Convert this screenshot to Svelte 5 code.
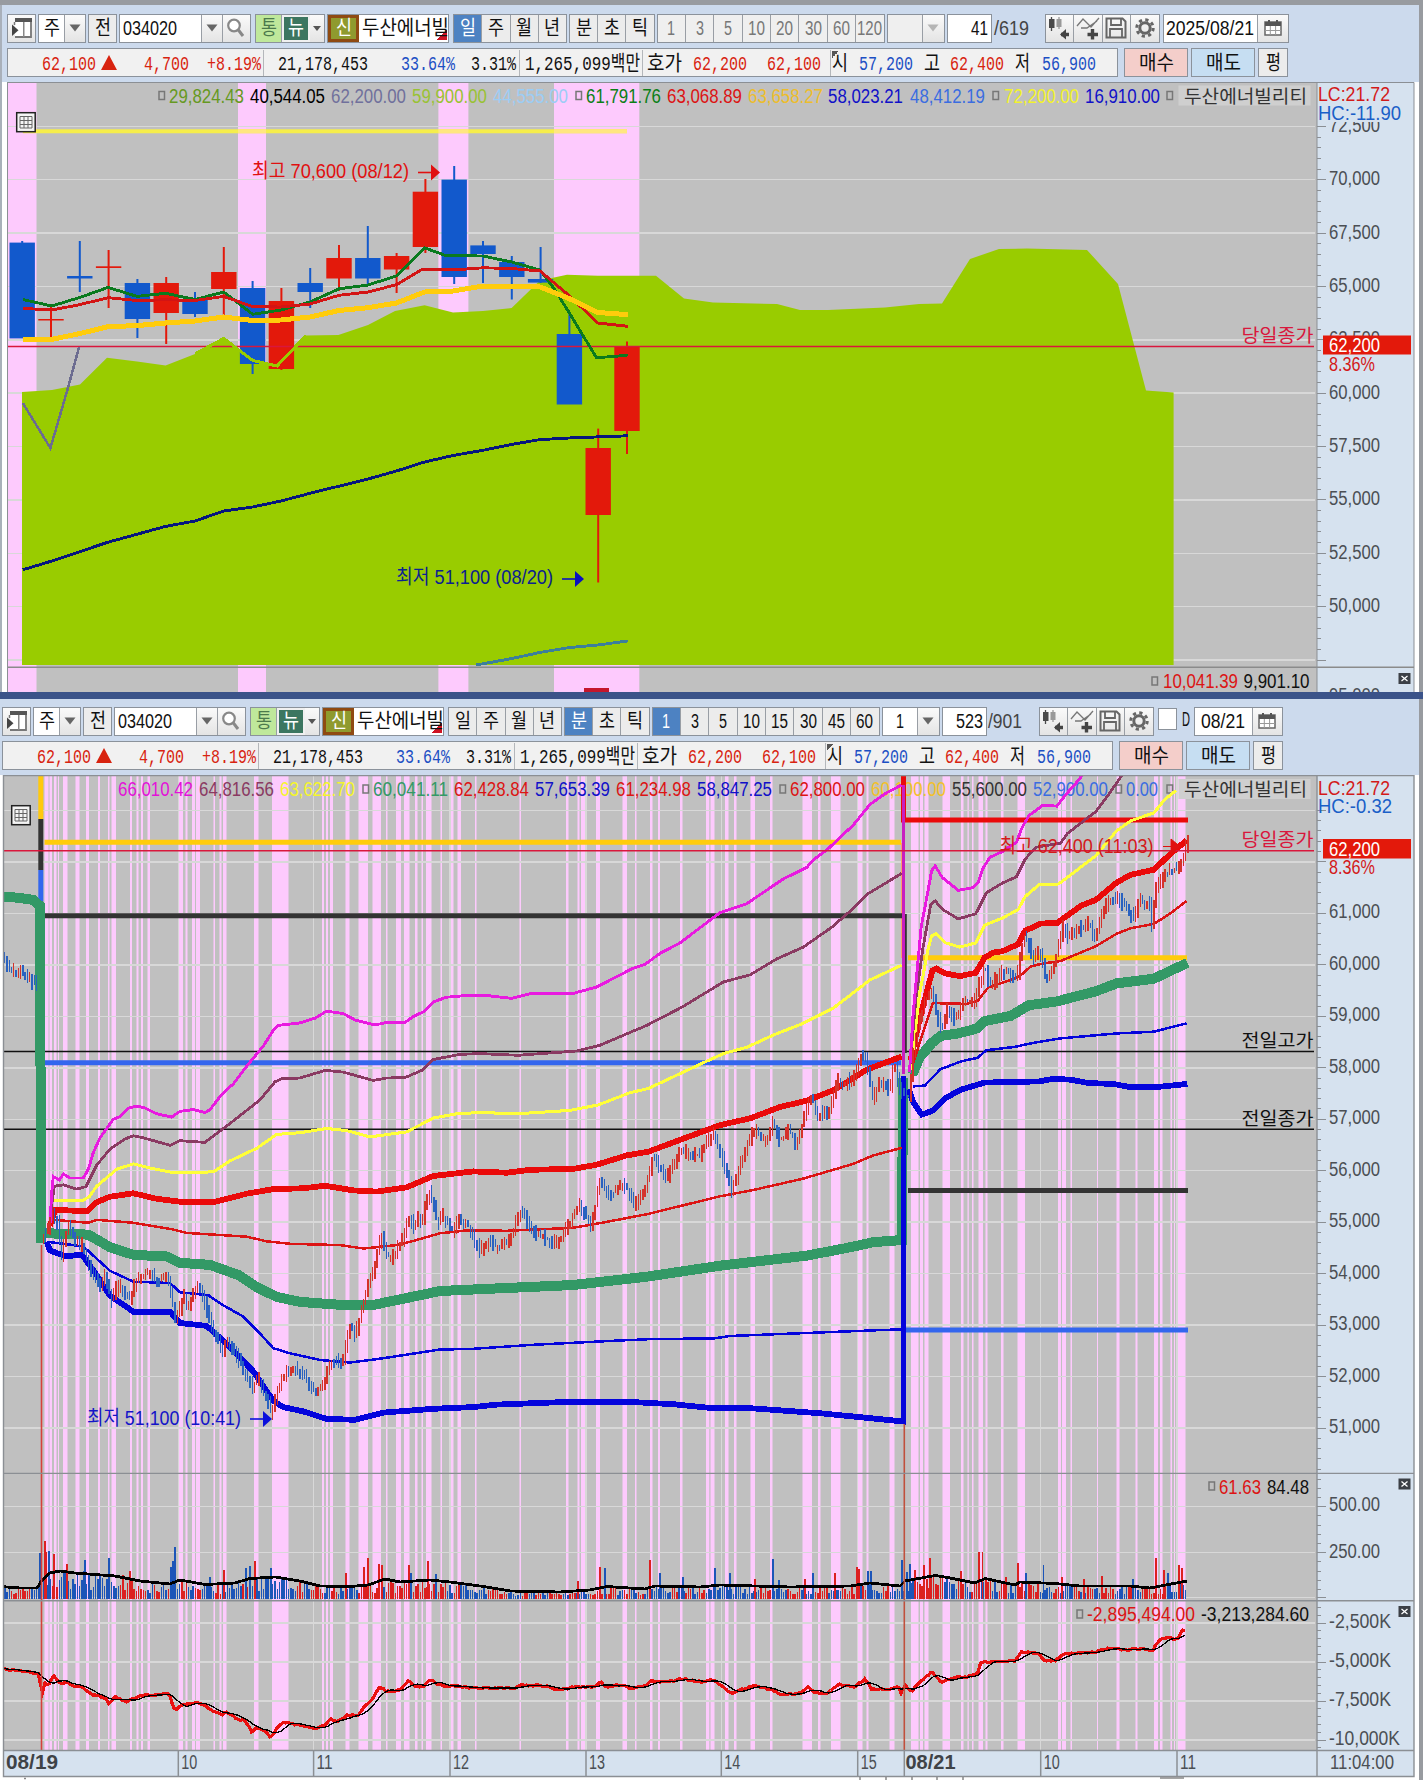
<script>
  const RED = '#e3190b';
  const BLUE = '#1259cc';
  const GREY = '#8b8f94';

  const info = [
    [34, '62,100', 54, '#d8230f'], [5, 'up', 16], [27, '4,700', 45, '#d8230f'], [18, '+8.19%', 54, '#d8230f'],
    [2, '|', 1], [14, '21,178,453', 90, '#111'], [33, '33.64%', 54, '#1c4fc4'], [16, '3.31%', 45, '#111'],
    [3, '|', 1], [5, '1,265,099백만', 115, '#111'], [2, '|', 1], [4, '호가', 35, '#111'],
    [11, '62,200', 54, '#d8230f'], [20, '62,100', 54, '#d8230f'], [9, '|', 1], [1, '시', 16, '#111', true],
    [11, '57,200', 54, '#1c4fc4'], [11, '고', 16, '#111'], [10, '62,400', 54, '#d8230f'],
    [11, '저', 15, '#111'], [12, '56,900', 54, '#1c4fc4']
  ];

  const c = (w, text = '', kind = '', tw = 0) => ({ w, text, kind, tw });
  const head = [
    { gap: 0, cells: [c(29, 'panel', 'icon')] },
    { gap: 2, cells: [c(27, '주', 'field', 16), c(21, 'down', 'icon')] },
    { gap: 2, cells: [c(29, '전', '', 16)] },
    { gap: 2, cells: [c(82, '034020', 'field left', 54), c(21, 'down', 'icon'), c(29, 'search', 'icon')] },
    { gap: 4, cells: [c(28, '통', 'lime', 16), c(26, '뉴', 'teal', 16), c(16, 'small', 'icon')] },
    { gap: 2, cells: [c(28, '신', 'olive', 16), c(94, '두산에너빌', 'field left flag', 87)] }
  ];
  const periods = ['일', '주', '월', '년'];
  const units = ['분', '초', '틱'];
  const textWidth = (t) => (t > '가' ? 16 : [0, 8, 17, 25][t.length]);
  const pick = (list, on, kind = '') => list.map((t) => c(28.5, t, t === on ? 'on' : kind, textWidth(t)));
  const tools = { gap: 0, cells: ['candle', 'line', 'save', 'gear'].map((n) => c(28.75, n, 'icon')) };

  const daily = [
    ...head,
    { gap: 4, cells: pick(periods, '일') },
    { gap: 2, cells: pick(units, '') },
    { gap: 2, cells: pick(['1', '3', '5', '10', '20', '30', '60', '120'], '', 'off') },
    { gap: 2, cells: [c(36, '', 'off'), c(22, 'downoff', 'icon')] },
    { gap: 2, cells: [c(45, '41', 'field right', 17)] }
  ];
  const minute = [
    ...head,
    { gap: 4, cells: pick(periods, '') },
    { gap: 2, cells: pick(units, '분') },
    { gap: 2, cells: pick(['1', '3', '5', '10', '15', '30', '45', '60'], '1') },
    { gap: 2, cells: [c(36, '1', 'field', 8), c(22, 'down', 'icon')] },
    { gap: 2, cells: [c(45, '523', 'field right', 27)] }
  ];
  const total = (cells) => cells.reduce((s, cell) => s + cell.w, 0);

  // daily chart
  const dx = (i) => 22.2 + 28.8 * i;
  const candles = [
    [0, 241, 338, 242.6, 338.4], [1, 306, 342, 319, 320.5], [0, 241, 292, 276, 278.5], [1, 250, 308, 266.3, 268],
    [0, 279, 338, 283, 319], [1, 277, 344, 283, 313], [0, 292, 317, 299.5, 314], [1, 247, 315, 272, 289],
    [0, 281, 374, 288, 364], [1, 288, 370, 301, 369], [0, 268, 308, 283, 292], [1, 245, 291, 258, 278.5],
    [0, 226, 284, 258, 278.5], [1, 253, 293, 256, 269.5], [1, 179, 253, 191.7, 247], [0, 166, 284, 179.6, 277],
    [0, 241, 283, 245.4, 254], [0, 256, 299.5, 262, 277], [0, 247, 283, 279, 282.6], [0, 313, 404, 334, 404.5],
    [1, 428.6, 582.5, 448, 515], [1, 341.5, 454, 347, 431]
  ];
  const cloud = '22,392 52,390 80,384.5 107,357.7 137,361.5 165.6,365.6 195,354 223.7,338.4 252.7,360.5 277,366 306,335.6 338.4,335 368,325 395,311 424.6,305.3 453,312.5 483,311 511.6,308 540,280.5 567,274.7 597.8,275.7 656,275.7 684,298.4 713,302.5 777,304 800,310 828,310 885,307.5 919,304 942,303.5 970,259 999,249 1027,248.5 1087,250 1118,284 1146,390.5 1173.6,392.6';
  const ma5 = '22.8,299.5 51.8,306 80,297.4 108,287.4 137,296.4 165.6,293.3 195,299.5 223.7,292 252.7,314.3 281,310 310,302 339,288.8 368,285 396.4,276 424.6,247.8 446,255.7 483,256 511.6,262 540,270 553.6,288 568.8,312 596.4,357.7 616,356.3 627.7,355';
  const ma10 = '22.8,308.4 51.8,310 80,304.6 108,297.7 137,300.5 165.6,299.8 195,300.5 223.7,296.4 252.7,306.7 281,307 310,304 339,295.3 368,292 396.4,284.7 422,269.5 460,269.5 483,267.8 511.6,268.5 540,271 568.8,295.3 597.8,323 627.7,326.3';
  const ma20 = '22.8,340 51.8,339.4 80,333.5 108,326.7 137,325.6 165.6,323 195,321 223.7,317 252.7,320.5 281,320 310,317 339,310.5 368,307.7 396.4,303 424.6,292 453,291 483,286 531,286 540,287 568.8,298.4 597.8,312.5 627.7,314.6';
  const ma60 = '22.8,569.8 51.8,561 108,542.2 165.6,526.4 195,521 223.7,511 252.7,507 281,501 310,493.3 368,479 396.4,471 424.6,462 453,455.5 483,450.3 511.6,444.4 540,439.6 568.8,438 597.8,436.9 627.7,435.8';
  const ma120 = '476,665 511.6,658.6 540,652.4 568.8,647.6 597.8,645 627.7,641';
  const dailyGrid = [72500, 70000, 67500, 65000, 62500, 60000, 57500, 55000, 52500, 50000, 47500].map((p, i) => [p, 126.3 + i * 53.37]);
  const dailyLegend = [
    [158], [169, '29,824.43', '#669922'], [250, '40,544.05', '#000'], [331, '62,200.00', '#70709c'], [412, '59,900.00', '#99c234'],
    [493, '44,555.00', '#9ccdf5'], [575], [586, '61,791.76', '#0b7f16'], [667, '63,068.89', '#dc1414'], [748, '63,658.27', '#edbd2c'],
    [828, '58,023.21', '#1010c8'], [910, '48,412.19', '#3b6de0'], [992], [1004, '72,200.00', '#f2f22c'], [1085, '16,910.00', '#1010c8'], [1166]
  ];

  // minute chart
  const bands = [
    [44.5, 4], [49.5, 2.5], [54, 2.5], [58, 1], [63, 4.5], [75.5, 4], [86, 3], [98, 2], [108, 1.5], [111.5, 4.5], [130, 2], [136.5, 2],
    [141, 2], [147.5, 2.5], [178.5, 4.5], [185.5, 2], [192, 3], [196, 4], [213.5, 1.5], [219.5, 2], [223, 3.5], [254, 4.5],
    [272, 16.5], [322, 2], [326, 2], [330, 3], [345.5, 4], [358.5, 9.5], [372.5, 8.5], [386, 1.5], [396, 5], [404, 5.5],
    [415, 2.5], [421.5, 1.5], [426, 5.5], [440.5, 1.5], [449.5, 4], [457.5, 3.5], [475, 1.5], [519.5, 1.5], [566, 2.5],
    [577.5, 2], [581, 5.5], [596, 4], [622.5, 4.5], [635, 1.5], [650, 2.5], [658, 2], [680, 2.5], [706, 3.3], [710.5, 4],
    [725, 3.5], [734, 2.5], [750.5, 4.5], [770, 2.5], [802.5, 9.5], [818, 2.5], [831, 9.5], [857.5, 5], [866.5, 2],
    [889.5, 5], [911, 7.5], [920, 3], [924.5, 4], [942.5, 7.5], [961, 2.5], [967.5, 1.3], [972, 1.5], [978.5, 4.5],
    [985.5, 2], [1001, 2.5], [1017.5, 7.5], [1058, 3], [1062, 4], [1070.5, 1.5], [1097, 1], [1116.5, 3], [1135.5, 2],
    [1154, 4], [1160, 2.5], [1170.5, 1.5], [1174, 1], [1177, 8.5]
  ];
  const magenta = [
    '50,1224 51.7,1192.5 53.3,1176.5 59.3,1180 63.3,1174 70,1178 83.3,1178 88.3,1169.3 93.3,1152.5 100,1137.8 113.3,1119.3 120,1116.7 128.3,1108.3 136.7,1106.2 145,1107.9 156.7,1113.8 171.7,1117.1 180,1111.3 193.3,1109.6 205,1112.5 210,1109.6 221.7,1094.4 233.3,1083.9 246.7,1066.2 263.3,1046 273.3,1030.4 278.3,1025.4 300,1022.9 315,1018.2 326.7,1011.1 343.3,1013.6 355,1019.9 375,1025 386.7,1022.4 405,1022.4 413.3,1016.5 425,1011 433.3,1001.8 446.7,997.2 466.7,995.5 490,995.9 511.7,998.4 530,993.8 573.3,993.4 596.7,987 633.3,968.1 645,964.4 660,953.4 680,942.9 720,912.6 746.7,903.7 783.3,878.9 806.7,867.5 813.3,860 828.3,848.6 853.3,825 870,804.4 886.7,792.6 901.7,785',
    '909.5,1072.5 913,1015.7 921.1,927.3 927.1,895.7 931.7,870.5 935.2,865.9 942.3,877.6 958.2,890.3 972.3,887.8 977.9,883.1 982.9,868.4 989.9,857.4 1002.3,851.6 1016.4,842.3 1021.7,828.4 1028.7,815.8 1042.8,805.3 1056.9,806.1 1065.7,794.7 1078.8,780 1083,774'
  ];
  const plum = [
    '50,1217.7 54.3,1186.2 63.3,1184.9 76.7,1189.1 86,1186.6 96.7,1165.1 110,1149.1 125,1139 133.3,1135.7 143.3,1137.8 170,1145.3 180,1140.7 205,1142.4 220,1131 233.3,1120.9 260,1099.9 275,1081.8 281.7,1078.8 300,1078 325,1070.4 343.3,1072.1 373.3,1080.5 386.7,1078 405,1077.6 421.7,1070.4 433.3,1059.5 460,1054.4 480,1053.6 518.3,1055.3 576.7,1051 600,1045.2 646.7,1025.4 681.7,1007.3 723.3,982 750,974.9 776.7,958.9 803.3,947.1 831.7,927.3 853.3,908.4 866.7,894.5 901.7,873.4',
    '909.5,1070.4 915.9,998.9 922.9,948.4 930.7,905 935.2,900.8 942.3,909.2 958.2,918.9 975.8,913.8 986.4,892.8 1002.3,883.1 1016.4,876.8 1025.2,859.1 1035.8,847.3 1060.5,843.1 1067.5,833.5 1095.7,811.6 1106.3,797.7 1118.7,780 1123,774'
  ];
  const yellow = [
    '53.3,1200 81.7,1200.9 89.3,1196.7 96.7,1186.2 116.7,1169.3 133.3,1163.9 150,1168 173.3,1172.7 213.3,1171.9 230,1160.9 256.7,1148.3 276.7,1134.4 300,1132.7 326.7,1128.5 346.7,1130.6 370,1136.9 406.7,1131.9 433.3,1118 456.7,1113.8 480,1112.5 516.7,1113.8 570,1110.4 598.3,1104.9 630,1092.7 648.3,1088.5 706.7,1061.2 723.3,1053.6 746.7,1047.3 773.3,1035.1 803.3,1023.3 833.3,1008.1 870,979.9 901.7,965.2',
    '910.6,1070.4 919.4,994.7 928.2,948.4 931.7,935.7 936.3,933.6 945.8,942.9 959.9,947.1 975.8,942.9 984.6,925.2 1002.3,918.1 1018.1,909.6 1025.2,896.6 1039.3,884.4 1058.7,884 1095.7,855.8 1116.9,830.5 1131,820.8 1153.9,812.8 1164.5,799.8 1176.1,790.5'
  ];
  const upper = [
    '50,1226 55,1209.7 86.7,1211.4 96.7,1202.2 110,1196.7 133.3,1193.3 156.7,1198.8 180,1201.7 213.3,1202.2 246.7,1193.7 273.3,1189.1 303.3,1188.3 325,1185.7 353.3,1190.4 376.7,1191.6 406.7,1187.4 433.3,1176 473.3,1171.4 506.7,1172.7 530,1169.8 573.3,1168.9 596.7,1164.7 626.7,1155.4 648.3,1151.7 680,1139.9 720,1125.1 750,1118.4 780,1107 806.7,1100.7 833.3,1090.2 846.7,1082.2 866.7,1069.6 901.7,1056.5',
    '910.6,1060 919.4,1019.9 928.2,986.2 932.4,970.7 936.3,968.6 945.8,973.6 959.9,976.1 975.8,972.8 984.6,957.6 993.4,952.6 1002.3,951.3 1018.1,944.2 1025.2,930.7 1041,923.5 1056.9,923.1 1081.6,905.4 1095.7,900 1116.9,882.3 1131,874.7 1153.9,869.7 1169.8,854.5 1186.7,840.2'
  ];
  const upperHalf = [
    '53.3,1219.8 88.3,1222.8 96.7,1219.8 133.3,1222.8 173.3,1229.5 186.7,1232.9 246.7,1236.7 266.7,1241.3 290,1243.8 340,1245.1 363.3,1248.5 396.7,1245.1 413.3,1240.9 440,1233.3 466.7,1230.4 506.7,1230.8 573.3,1227.8 606.7,1221.9 648.3,1213.9 720,1196.3 753.3,1190 803.3,1178.6 853.3,1163.9 873.3,1155.4 901.7,1147.9',
    '912.3,1066.2 922.9,1032.5 932.8,1003.1 967,1003.9 977.6,1001 988.2,987.5 1011.1,979.9 1021.7,974.5 1030.5,966.5 1042.8,963.5 1060.5,961 1095.7,946.3 1116.9,933.6 1131,928.2 1153.9,923.9 1169.8,913.8 1186.7,900.8'
  ];
  const vwap = [
    '3,896.6 20,897.9 33.3,900 40.2,906 40.2,1010 41.5,1243',
    '46,1233 56.7,1233.7 88.3,1234.6 110,1247.2 133.3,1254.8 166.7,1256.5 180,1262.8 210,1264.9 238.3,1275 256.7,1287.2 276.7,1296.9 300,1301.9 346.7,1305.3 373.3,1304.9 400,1299.4 440,1291 573.3,1285 646.7,1276.7 720,1265.7 806.7,1255.6 846.7,1248 873.3,1242.2 902,1240 903,1078',
    '912.3,1074.6 919.4,1057.8 931.7,1043.1 940.5,1035.9 958.2,1033.4 977.6,1028.3 984.6,1021.2 1011.1,1015.7 1028.7,1005.2 1056.9,1001.4 1095.7,991.3 1116.9,983.3 1153.9,978.7 1173.3,969.4 1187.4,963'
  ];
  const lowerHalf = [
    '46.7,1241.7 83.3,1246.4 93.3,1255.6 110,1270.8 133.3,1281.7 170,1283 180,1292.2 208.3,1295.2 223.3,1305.3 243.3,1316.6 260,1333.5 273.3,1348.2 290,1353.3 320,1360 350,1362.5 380,1358.7 440,1349.5 470,1349 533.3,1344.8 606.7,1341.1 653.3,1339 713.3,1338.5 730,1336 870,1330.5 901.7,1329.3',
    '913,1086.4 924.7,1085.6 940.5,1069.2 961.7,1061.2 977.6,1057.8 986.4,1050.2 1014.6,1046.9 1032.2,1043.1 1060.5,1038.4 1116.9,1033.4 1153.9,1031.7 1186.7,1023.3'
  ];
  const lower = [
    '46.7,1241.7 50,1250.6 66.7,1256.5 81.7,1254.4 93.3,1270.3 110,1295.6 133.3,1311.6 170,1311.6 180,1323 206.7,1325.9 226.7,1344 253.3,1371.4 273.3,1400.8 283.3,1407.1 303.3,1411.4 326.7,1418.9 355,1419.8 383.3,1412.6 433.3,1408.8 473.3,1407.1 496.7,1404.6 573.3,1401.7 633.3,1402.1 673.3,1404.2 706.7,1407.6 753.3,1408.4 823.3,1413.5 903.5,1421.5 903.5,1076',
    '908.8,1089.4 913,1102 921.8,1114.6 933.5,1110.4 945.8,1097.8 961.7,1089.4 984.6,1082.6 1039.3,1081.4 1053.4,1078.8 1071,1079.7 1088.7,1083.1 1113.4,1083.9 1131,1087.3 1159.2,1086.8 1187.4,1083.9'
  ];

  const noise = (n) => {
    const v = Math.sin(n * 127.1 + 11.7) * 43758.5453;
    return v - Math.floor(v);
  };
  const at = (pts, x) => {
    let i = 1;
    while (i < pts.length - 1 && pts[i][0] < x) i++;
    const [x0, y0] = pts[i - 1];
    const [x1, y1] = pts[i];
    return y0 + ((y1 - y0) * (x - x0)) / (x1 - x0);
  };
  const parse = (s) => s.split(' ').map((p) => p.split(',').map(Number));
  const STEP = 2.271;

  const pricePath = parse('3,958 13,972 20,972 38,985 40,1240 47,1232 52,1212 58,1224 62,1256 66,1235 70,1225 75,1240 83,1245 88,1262 95,1275 100,1285 105,1272 112,1300 118,1285 130,1298 137,1280 150,1270 157,1280 168,1275 176,1320 184,1295 188,1305 199,1285 206,1305 214,1335 223,1350 228,1338 240,1362 253,1388 258,1378 266,1395 272,1415 278,1390 287,1368 300,1370 308,1380 316,1393 324,1380 333,1360 343,1360 350,1325 355,1335 362,1310 368,1285 375,1265 381,1235 387,1255 392,1258 402,1240 410,1217 415,1230 418,1215 422,1222 429,1190 433,1200 438,1225 443,1215 452,1230 460,1220 467,1222 475,1240 480,1250 490,1240 498,1248 510,1240 520,1210 530,1225 537,1235 558,1242 568,1225 580,1205 592,1225 600,1180 610,1195 625,1183 635,1205 645,1190 653,1155 667,1178 680,1150 700,1155 713,1132 724,1162 732,1190 742,1160 753,1130 767,1140 773,1120 780,1140 790,1130 797,1145 805,1115 812,1095 818,1115 830,1110 838,1080 845,1085 855,1075 861,1055 867,1060 873,1100 880,1080 890,1090 894,1062 900,1090 906,1095 910,1095 914,1050 918,1025 926,1000 932,990 937,1015 942,1030 948,1008 955,1020 965,1000 975,1000 985,965 990,985 1005,970 1017,978 1022,945 1026,935 1033,957 1040,950 1046,980 1055,962 1063,925 1068,935 1075,930 1090,923 1095,940 1105,905 1117,897 1125,905 1134,918 1140,898 1150,905 1152,925 1157,885 1170,870 1180,868 1186,845');
  const ticks = [];
  for (let x = 4, i = 0; x < 1188; x += STEP, i++) {
    const a = at(pricePath, x - STEP / 2);
    const b = at(pricePath, x + STEP / 2);
    if (Math.abs(a - b) > 60) continue;
    const top = Math.min(a, b) - noise(i) * 8;
    const bottom = Math.max(a, b) + 1 + noise(i + 900) * 8;
    ticks.push([x, top, bottom - top, b - a + (noise(i + 400) - 0.5) * 7 < 0]);
  }

  const volAvg = parse('3,1586.7 20,1588 37,1588 42,1580 50,1573 60,1571 75,1573 115,1576 140,1581 170,1584 180,1580 205,1584.5 235,1583 250,1578.5 275,1577 300,1581 320,1586 350,1586.5 368,1585 385,1579 400,1582 430,1580 450,1582 480,1586 510,1591 560,1592 590,1590 607,1586.5 645,1589 655,1586 700,1587 720,1585 790,1587 850,1586 870,1583 900,1586 905,1581 935,1575.5 950,1578 975,1583 985,1578.5 1015,1585 1020,1582 1055,1583.5 1080,1586 1130,1586 1150,1588 1187,1581');
  const volumes = [];
  for (let x = 4, i = 0; x < 1187; x += STEP, i++) {
    const h = (1599 - at(volAvg, x)) * (0.35 + noise(i + 77) * 0.75);
    volumes.push([x, 1599 - h, noise(Math.floor(i / 3) + 31) > 0.5]);
  }
  const spikes = [
    [41.5, 1499, 1], [40, 1553, 0], [45, 1541, 1], [46.5, 1552, 1], [49, 1551, 0], [54, 1554, 1], [67, 1564, 1], [85, 1560, 0], [109, 1558, 0], [130, 1571, 1],
    [171, 1567, 0], [173, 1561, 0], [175, 1547, 0], [210, 1577, 0], [224, 1570, 1], [246, 1568, 0], [250, 1566, 0], [255, 1561, 1],
    [271, 1568, 0], [346, 1573, 1], [364, 1567, 1], [368, 1558, 1], [379, 1564, 1], [382, 1565, 1], [409, 1565, 1], [411, 1573, 0],
    [428, 1561, 1], [436, 1574, 0], [578, 1581, 1], [600, 1567, 1], [605, 1568, 0], [650, 1560, 1], [660, 1573, 0], [683, 1577, 0], [715, 1568, 0], [730, 1573, 0],
    [755, 1579, 1], [773, 1559, 0], [779, 1580, 0], [805, 1579, 1], [813, 1573, 0], [835, 1573, 1], [857, 1567, 1], [859, 1569, 1], [868, 1571, 0], [871, 1571, 0],
    [902, 1560, 0], [904.3, 1517, 0], [907, 1572, 0], [910, 1564, 0], [915, 1570, 1], [924, 1565, 1], [930, 1558, 1], [961, 1571, 1], [979, 1552, 1], [982.5, 1552, 1],
    [1006, 1577, 1], [1018, 1563, 1], [1026, 1573, 0], [1043.5, 1565, 0], [1062, 1577, 1], [1084, 1579, 1], [1102, 1576, 1], [1133, 1579, 0],
    [1156, 1558, 1], [1164, 1570, 1], [1168, 1573, 0], [1179, 1565, 1], [1182, 1568, 1]
  ];

  const flowPath = parse('4,1669 23,1670.7 39,1674.3 41.8,1695 45,1683 49,1685 53,1675 62,1685 66.6,1680.7 73.5,1687 80,1685.7 92,1695 105.6,1697.7 109,1704 115,1697 126,1701.7 142,1695.7 158,1695 168.5,1693 175.4,1711.7 181,1705 197.4,1702 206.6,1706 212,1711 222,1715 226,1711 236.5,1719 245.6,1720.7 252.5,1733 257,1726.7 265,1731 271,1738 277,1728 284,1722 298.4,1725 313.6,1729 323.7,1726 330.6,1719 337.5,1721.7 347.6,1715 358,1715.7 365,1706 373,1698 380,1686.7 386.6,1691.7 399.4,1690 408.6,1680.7 415.5,1686.7 424.7,1686 429.3,1679 438.5,1685 459,1686.7 480,1688 514,1688 521,1685 546,1686 558,1690 574,1687 594.6,1687 600,1682 606,1686.7 624.4,1685 631,1689 647.4,1685 650.6,1680.7 665.7,1682 684,1679 702.5,1682 712.4,1679.3 722,1686 732,1694 739,1690 754.4,1686 767,1689 776,1691 780.7,1695 801.4,1693 809,1686.7 815,1692.7 829,1692.7 838,1684 854.5,1687 865,1679 871.5,1689 889,1689 899,1687 902,1695 904,1684 911,1692 921,1681 932,1671.7 941,1682 953.6,1678 972,1676 978,1673 981,1661.7 999.7,1661.7 1015.8,1660.7 1020.4,1652 1029.7,1652 1039,1654 1043.5,1661 1055,1660.7 1064,1654 1094,1652 1108,1648 1128.8,1650 1142.6,1648 1152.8,1650.7 1157,1642.7 1165.7,1637 1177,1640 1182,1630 1185.5,1630');
  const flow = [];
  for (let x = 4, i = 0; x < 1187; x += STEP, i++) flow.push([x, at(flowPath, x) + (noise(i + 5) - 0.5) * 1.6]);
  const flowAvg = flow.map(([x], i) => {
    const part = flow.slice(Math.max(0, i - 6), i + 1);
    return [x, part.reduce((s, p) => s + p[1], 0) / part.length];
  });
  const join = (pts) => pts.map((p) => p.map((v) => v.toFixed(1)).join(',')).join(' ');

  const minuteGrid = Array.from({ length: 13 }, (_, i) => [63000 - i * 1000, 810.4 + i * 51.475]);
  const minuteLegend = [
    [118, '66,010.42', '#e312d8'], [199, '64,816.56', '#8a3a62'], [280, '63,622.70', '#f5f52c'], [362], [373, '60,041.11', '#339966'],
    [454, '62,428.84', '#dc1414'], [535, '57,653.39', '#1010c8'], [616, '61,234.98', '#dc1414'], [697, '58,847.25', '#1010c8'], [779],
    [790, '62,800.00', '#dc1414'], [871, '60,100.00', '#f3c12a'], [952, '55,600.00', '#333'], [1033, '52,900.00', '#3b6de0'], [1115],
    [1126, '0.00', '#3b6de0'], [1166]
  ];
  const hours = [[178.3, '10'], [313.6, '11'], [450, '12'], [586, '13'], [721.3, '14'], [857.7, '15'], [1040.7, '10'], [1177, '11']];
  const comma = (n) => n.toLocaleString('en-US');
</script>

{#snippet fit(text, w, fill)}
  <svg class="fit" width={w} height="24"><text x="0" y="19" textLength={w} lengthAdjust="spacingAndGlyphs" {fill}>{text}</text></svg>
{/snippet}

{#snippet txt(text, x, y, w, fill, cls = '')}
  <text {x} {y} textLength={w} lengthAdjust="spacingAndGlyphs" {fill} class={cls}>{text}</text>
{/snippet}

{#snippet icon(name)}
  {#if name === 'down' || name === 'downoff'}
    <svg width="12" height="8"><path d="M0.5 0.5h11L6 7.5z" fill={name === 'down' ? '#666' : '#b5b5b5'} /></svg>
  {:else if name === 'small'}
    <svg width="8" height="5"><path d="M0 0h8L4 5z" fill="#555" /></svg>
  {:else if name === 'panel'}
    <svg width="22" height="22" viewBox="0 0 22 22"><path d="M4 2h16v18H4" fill="#fff" stroke="#777" stroke-width="1.8" /><path d="M4 1h17v4H4z" fill="#555" /><path d="M12 5h1.500v15H12z" fill="#888" /><path d="M3.500 5v3" stroke="#777" stroke-width="1.500" /><path d="M1 7.500v11.500l6.500-5.800z" fill="#444" /></svg>
  {:else if name === 'search'}
    <svg width="20" height="20" viewBox="0 0 20 20"><circle cx="8" cy="7.5" r="5.8" fill="#fff" stroke="#888" stroke-width="2.2" /><path d="M12 11.5l5 6.500" stroke="#888" stroke-width="3" /></svg>
  {:else if name === 'candle'}
    <svg width="24" height="24" viewBox="0 0 24 24"><path d="M4.500 1v14" stroke="#4a4a4a" stroke-width="1.300" /><path d="M12 1v12" stroke="#999" stroke-width="1.300" /><path d="M2 3h5.500v9H2z" fill="#4a4a4a" /><path d="M9.500 3h5v8h-5z" fill="#999" /><path d="M14 18.500h8" stroke="#444" stroke-width="3.500" /><path d="M19 13v10.500l-6-5z" fill="#444" /></svg>
  {:else if name === 'line'}
    <svg width="24" height="24" viewBox="0 0 24 24"><path d="M1 10l6-7 8 8 8-9M1 10M5 12l6 0 10-7" fill="none" stroke="#777" stroke-width="1.300" /><path d="M16.500 13v10.500M11.500 18.500h10.500" stroke="#444" stroke-width="3.400" /></svg>
  {:else if name === 'save'}
    <svg width="22" height="22" viewBox="0 0 22 22"><path d="M1.500 1.500h16l3 3v16h-19z" fill="none" stroke="#666" stroke-width="2" /><path d="M6 2v6h10V2M5 20v-8h12v8" fill="none" stroke="#666" stroke-width="1.800" /></svg>
  {:else if name === 'gear'}
    <svg width="20" height="20" viewBox="0 0 20 20"><circle cx="10" cy="10" r="8.200" fill="none" stroke="#666" stroke-width="3" stroke-dasharray="3.220 3.220" /><circle cx="10" cy="10" r="5.200" fill="none" stroke="#666" stroke-width="3" /></svg>
  {:else if name === 'cal'}
    <svg width="18" height="16" viewBox="0 0 18 16"><path d="M1 2h16v13H1z" fill="#fff" stroke="#666" stroke-width="1.500" /><path d="M1 2h16v4H1zM4 0h2v3H4zM12 0h2v3h-2z" fill="#555" /><path d="M6.300 6v9M11.600 6v9M1 10.500h16" stroke="#999" /></svg>
  {/if}
{/snippet}

{#snippet group(g)}
  <div class="group" style:margin-left="{g.gap}px" style:width="{total(g.cells)}px">
    {#each g.cells as cell}
      <div class="cell {cell.kind}" style:flex-grow={cell.w}>
        {#if cell.kind === 'icon'}{@render icon(cell.text)}
        {:else if cell.text}{@render fit(cell.text, cell.tw, 'currentColor')}{/if}
      </div>
    {/each}
  </div>
{/snippet}

{#snippet quotes()}
  <div class="quotes">
    <div class="info">
      {#each info as [gap, text, w, color, mark]}
        <span class="item" class:rule={text === '|'} class:mark style:margin-left="{gap}px" style:width="{w}px">
          {#if text === 'up'}<svg width="16" height="15"><path d="M8 0l8 15H0z" fill="#d8230f" /></svg>
          {:else if text !== '|'}{@render fit(text, w, color)}{/if}
        </span>
      {/each}
    </div>
    <button class="buy">{@render fit('매수', 35, '#111')}</button>
    <button class="sell">{@render fit('매도', 35, '#111')}</button>
    <button class="eval">{@render fit('평', 15, '#111')}</button>
  </div>
{/snippet}

{#snippet legend(items, y)}
  {#each items as [x, text, fill]}
    {#if text}{@render txt(text, x, y, text.length > 5 ? 75 : 32, fill)}
    {:else}{@render marker(x + 1, y - 11)}{/if}
  {/each}
  <rect x="1178.500" y={y - 17} width="132" height="20" fill="#cfcfcf" />
  {@render txt('두산에너빌리티', 1184, y, 123, '#333', 'ko')}
{/snippet}

{#snippet marker(x, y)}
  <rect {x} {y} width="5.500" height="8" fill="none" stroke="#777" stroke-width="1.500" />
{/snippet}

{#snippet gridIcon(x, y)}
  <g transform="translate({x} {y})">
    <rect x="0.700" y="0.700" width="18.500" height="19" fill="#f4f4f4" stroke="#222" stroke-width="1.500" />
    <path d="M4 4.500h12v11.500H4zM8 4.500V16M12 4.500V16M4 8.500h12M4 12.500h12" fill="none" stroke="#666" />
  </g>
{/snippet}

{#snippet close(y)}
  <rect x="1398.500" {y} width="12" height="11" fill="#3c4046" />
  <path d="M1401.500 {y + 3}l6 5m0 -5l-6 5" stroke="#fff" stroke-width="1.300" />
{/snippet}

{#snippet arrow(x, y, color)}
  <path d="M{x} {y}h16" stroke={color} stroke-width="1.600" />
  <path d="M{x + 13} {y - 8}l9 8l-9 8z" fill={color} />
{/snippet}

{#snippet lines(list, color, width)}
  {#each list as points}<polyline {points} fill="none" stroke={color} stroke-width={width} />{/each}
{/snippet}

{#snippet scale(y0, y1, step)}
  {#each Array(Math.floor((y1 - y0) / step) + 1) as _, i}
    <path d="M1317 {y0 + i * step}h4" stroke={GREY} />
  {/each}
{/snippet}

<main>
  <section class="window daily">
    <div class="bar">
      {#each daily as g}{@render group(g)}{/each}
      <span class="total">{@render fit('/619', 35, '#444')}</span>
      {@render group(tools)}
      {@render group({ gap: 3, cells: [c(96, '2025/08/21', 'field', 88), c(30, 'cal', 'icon')] })}
    </div>
    {@render quotes()}
    <svg class="chart" width="1419" height="610" viewBox="0 82 1419 610">
      <rect x="2" y="82" width="1417" height="610" fill="#fff" />
      <rect x="7" y="82" width="1310" height="610" fill="#c0c0c0" />
      <rect x="1317" y="82" width="97" height="610" fill="#d6e2ef" />
      {#each [[7, 29.5], [238, 28], [438.4, 30], [554, 85.3]] as [x, w]}
        <rect {x} y="83" width={w} height="609" fill="#fdcafd" />
      {/each}
      <g shape-rendering="crispEdges">
        {#each dailyGrid as [, y]}
          <path d="M7 {y}H1315" stroke="#d8d8d8" stroke-width="1.500" />
          <path d="M1317 {y}h9" stroke={GREY} />
        {/each}
        {@render scale(137, 664, 10.674)}
      </g>
      <path d="M22.800 131.200H627" stroke="#f6ee4b" stroke-width="4" />
      {#each [[238, 28], [438.4, 30], [554, 73]] as [x, w]}
        <rect {x} y="129.200" width={w} height="4" fill="#ffe680" />
      {/each}
      <polygon points="{cloud} 1173.600,665 22,665" fill="#99cc00" />
      {#each candles as [up, high, low, open, shut], i}
        <rect x={dx(i) - 1} y={high} width="2" height={low - high} fill={up ? RED : BLUE} />
        <rect x={dx(i) - 12.7} y={open} width="25.400" height={shut - open} fill={up ? RED : BLUE} />
      {/each}
      <path d="M7 346.500H1314" stroke="#d9173c" stroke-width="1.500" />
      <g shape-rendering="crispEdges">
        {@render lines(['195,354 223.7,338.4 252.7,360.5 277,366 306,335.6'], '#99cc00', 3)}
        {@render lines([ma5], '#0a7a1e', 2.9)}
        {@render lines([ma10], '#d31414', 2.9)}
        {@render lines([ma20], '#ffcc0c', 5)}
        {@render lines([ma60], '#06167e', 2.9)}
        {@render lines([ma120], '#3c7f9a', 2.9)}
        {@render lines(['22.8,403 50.4,448 67,391.4 79,347.3'], '#6c6c90', 2.5)}
      </g>
      {@render txt('최고 70,600 (08/12)', 252, 178, 157, '#e01010')}
      {@render arrow(418, 172.5, '#e01010')}
      {@render txt('최저 51,100 (08/20)', 396, 584, 157, '#0b2290')}
      {@render arrow(562, 579, '#0a10c0')}
      {@render txt('당일종가', 1241.5, 342, 72, '#d9173c', 'ko')}
      {@render legend(dailyLegend, 102.5)}
      {@render gridIcon(16, 112)}
      {#each dailyGrid.slice(0, 10) as [p, y]}{@render txt(comma(p), 1329, y + 5.5, 51, '#4b4f54')}{/each}
      <rect x="1327" y="105" width="60" height="17" fill="#d6e2ef" />
      {@render txt('LC:21.72', 1318, 101, 72, '#d31a1a')}
      {@render txt('HC:-11.90', 1318, 119.5, 83, '#1a5fc8')}
      <rect x="1323" y="335.500" width="88" height="19" fill={RED} />
      {@render txt('62,200', 1329, 352, 51, '#fff')}
      {@render txt('8.36%', 1329, 370.5, 46, '#d31a1a')}
      <path d="M7 667.300H1414" stroke="#8b8b8b" stroke-width="1.500" />
      {@render txt('10,041.39', 1163, 688, 75, '#dc1414')}
      {@render txt('9,901.10', 1243.5, 688, 66, '#111')}
      {@render marker(1152, 677)}
      {@render txt('95,000', 1329, 702, 51, '#4b4f54')}
      {@render close(673)}
      <rect x="584" y="688" width="25" height="4" fill="#c4162c" />
      <path d="M7 82.500H1414V692M7.500 82V692M1317 82V692" fill="none" stroke={GREY} />
    </svg>
  </section>

  <section class="window minute">
    <div class="bar">
      {#each minute as g}{@render group(g)}{/each}
      <span class="total">{@render fit('/901', 34, '#444')}</span>
      {@render group(tools)}
      <span class="check"></span>
      <span class="d">{@render fit('D', 8, '#111')}</span>
      {@render group({ gap: 4, cells: [c(59, '08/21', 'field', 44), c(30, 'cal', 'icon')] })}
    </div>
    {@render quotes()}
    <svg class="chart" width="1419" height="1005" viewBox="0 775 1419 1005">
      <rect y="775" width="1419" height="1005" fill="#fff" />
      <rect x="3" y="775" width="1314" height="976" fill="#c0c0c0" />
      <rect x="1317" y="775" width="97" height="976" fill="#d6e2ef" />
      {#each bands as [x, w]}<rect {x} y="776" width={w} height="975" fill="#fdcafd" />{/each}
      <g shape-rendering="crispEdges">
        {#each minuteGrid as [, y]}
          <path d="M3 {y}H1315" stroke="#d8d8d8" stroke-width="1.500" />
          <path d="M1317 {y}h9" stroke={GREY} />
        {/each}
        {#each [1506.3, 1552.3, 1597.5, 1623, 1662, 1701, 1740] as y}
          <path d="M3 {y}H1315" stroke="#d8d8d8" stroke-width="1.500" />
          <path d="M1317 {y}h9" stroke={GREY} />
        {/each}
        {#each hours as [x]}<path d="M{x} 776V1751" stroke="#d8d8d8" stroke-width="1.500" />{/each}
        {@render scale(820.7, 1470, 10.295)}
        {@render scale(1479, 1596, 9.2)}
        {@render scale(1607.4, 1748, 7.8)}
      </g>
      {@render legend(minuteLegend, 796)}
      {@render gridIcon(11, 805)}

      <path d="M3 1051.500H1314M3 1129.300H1314" stroke="#111" stroke-width="1.600" />
      <g fill="none" stroke-width="5">
        <path d="M40.800 776V819" stroke="#ffc90e" />
        <path d="M40.800 819V870" stroke="#333" />
        <path d="M40.800 870V902" stroke="#3366ee" />
        <path d="M44.500 842.300H901M908 957.800H1187" stroke="#ffcc0c" />
        <path d="M902.500 843v115" stroke="#ff9d6a" stroke-width="3" />
        <path d="M45 915.700H902M908 1190.400H1188" stroke="#333" />
        <path d="M905.300 914V1053" stroke="#333" stroke-width="3" />
        <path d="M45 1062.800H901M905 1330H1188" stroke="#3366ee" />
        <path d="M903.500 776V820H1188" stroke="#ea0a0a" />
      </g>
      <g shape-rendering="crispEdges">
        {@render lines(vwap, '#339966', 10)}
        {@render lines(lower, '#0404dc', 5.8)}
        {@render lines(lowerHalf, '#0404dc', 2.5)}
        {@render lines(upper, '#ea0a0a', 5.8)}
        {@render lines(upperHalf, '#dc1414', 2.5)}
        {@render lines(yellow, '#ffff38', 3)}
        {@render lines(plum, '#8a3a62', 2.8)}
        {@render lines(magenta, '#e81ae0', 2.9)}
        <path d="M903.800 785V1074" stroke="#c81ec0" stroke-width="3" />
        {#each ticks as [x, y, h, up]}<rect {x} {y} width="1.400" height={h} fill={up ? '#d4322a' : '#2a62c0'} />{/each}
      </g>
      <path d="M3 850.700H1314" stroke="#d9173c" stroke-width="1.600" />
      {@render txt('최고 62,400 (11:03)', 999.5, 853, 154, '#d31a1a')}
      <path d="M1163 846.500h8M1171 839l9 7.500l-9 7.500z" fill="#e01010" stroke="#e01010" />
      {@render txt('최저 51,100 (10:41)', 87, 1425, 154, '#1414c8')}
      {@render arrow(250, 1419, '#0a10dc')}
      {@render txt('당일종가', 1241.5, 846, 72, '#d9173c', 'ko')}
      {@render txt('전일고가', 1241.5, 1047, 72, '#111', 'ko')}
      {@render txt('전일종가', 1241.5, 1125, 72, '#111', 'ko')}

      {#each minuteGrid.slice(2) as [p, y]}{@render txt(comma(p), 1329, y + 5, 51, '#4b4f54')}{/each}
      {@render txt('LC:21.72', 1318, 795, 72, '#d31a1a')}
      {@render txt('HC:-0.32', 1318, 812.5, 74, '#1a5fc8')}
      <rect x="1323" y="839" width="88" height="19.500" fill={RED} />
      {@render txt('62,200', 1329, 856, 51, '#fff')}
      {@render txt('8.36%', 1329, 874, 46, '#d31a1a')}

      <g shape-rendering="crispEdges">
        {#each volumes as [x, y, up]}<rect {x} {y} width="1.500" height={1599 - y} fill={up ? '#dc2020' : '#1c55b8'} />{/each}
        {#each spikes as [x, y, up]}<rect x={x - 0.7} {y} width="1.500" height={1599 - y} fill={up ? '#dc2020' : '#1c55b8'} />{/each}
        <polyline points={join(volAvg)} fill="none" stroke="#000" stroke-width="2.800" />
        <polyline points={join(flow)} fill="none" stroke="#ea1010" stroke-width="3.200" />
        <polyline points={join(flowAvg)} fill="none" stroke="#000" stroke-width="1.300" />
      </g>
      <path d="M41.500 1245V1751" stroke="#d6403c" stroke-width="1.600" />
      <path d="M904.300 1424V1751" stroke="#c0503c" stroke-width="1.600" />

      {@render txt('61.63', 1219, 1494, 42, '#dc1414')}
      {@render txt('84.48', 1267, 1494, 42, '#111')}
      {@render marker(1209, 1482)}
      {@render txt('-2,895,494.00', 1087, 1621, 108, '#dc1414')}
      {@render txt('-3,213,284.60', 1201, 1621, 108, '#111')}
      {@render marker(1077, 1610)}
      {@render txt('500.00', 1329, 1511, 51, '#4b4f54')}
      {@render txt('250.00', 1329, 1557.5, 51, '#4b4f54')}
      {@render txt('-2,500K', 1329, 1628, 62, '#4b4f54')}
      {@render txt('-5,000K', 1329, 1667, 62, '#4b4f54')}
      {@render txt('-7,500K', 1329, 1706, 62, '#4b4f54')}
      {@render txt('-10,000K', 1329, 1745, 71, '#4b4f54')}
      {@render close(1478.5)}
      {@render close(1606)}

      <rect x="3" y="1750.500" width="1411" height="26" fill="#d6e2ef" />
      {#each hours as [x, t]}
        <path d="M{x} 1751V1776" stroke={GREY} stroke-width="1.500" />
        {@render txt(t, x + 3, 1769, 16, '#4b4f54')}
      {/each}
      <path d="M904.300 1751V1776" stroke={GREY} stroke-width="1.500" />
      {@render txt('08/19', 6, 1769, 52, '#3f4347', 'bold')}
      {@render txt('08/21', 905.5, 1769, 50, '#3f4347', 'bold')}
      {@render txt('11:04:00', 1330, 1769, 64, '#4b4f54')}
      <path d="M3 775.500H1414V1776.500H3.500V775M1317 775V1776M3 1473.400H1414M3 1600.700H1414M3 1750.500H1414" fill="none" stroke={GREY} stroke-width="1.400" />
      <path d="M24 1778.500h2M860 1777v3M886 1777v3M912 1777v3M937 1777v3M963 1777v3M1160 1778h24" stroke="#888" stroke-width="1.500" />
    </svg>
  </section>
</main>

<style>
  :global(body) { background: #989ba0; }
  main { width: 1423px; height: 1780px; overflow: hidden; padding-top: 5px; box-sizing: border-box; }
  .window { width: 1419px; background: #ccdaed; box-sizing: border-box; overflow: hidden; }
  .daily { height: 687px; border-left: 2px solid #a9b0ba; }
  .daily .chart { margin-left: -2px; }
  .minute { width: 1423px; height: 1088px; border-top: 7px solid #3b5389; background: linear-gradient(90deg, #ccdaed 1419px, #989ba0 1419px); }
  .bar { display: flex; align-items: center; height: 30px; }
  .daily .bar { padding: 8px 0 0 5px; }
  .minute .bar { padding: 7px 0 0 2px; }
  .group { display: flex; height: 29px; box-sizing: border-box; border: 1.5px solid #8b929b; flex: none; }
  .cell { display: flex; align-items: center; justify-content: center; box-sizing: border-box; background: #ececec; color: #111; border-right: 1px solid #999ea5; flex: 1 1 0; min-width: 0; }
  .cell:last-child { border-right: 0; }
  .cell.icon { background: linear-gradient(#fafafa, #e4e4e4); }
  .cell.icon svg { flex: none; }
  .cell.field { background: #fff; }
  .cell.left { justify-content: flex-start; padding-left: 3px; }
  .cell.right { justify-content: flex-end; padding-right: 3px; }
  .cell.on { background: #4d82c2; color: #fff; }
  .cell.off { background: #efefef; color: #777; }
  .cell.lime { background: #bfe89b; color: #4c7a4c; }
  .cell.teal { background: #3c7660; color: #fff; border: 2px solid #f0f0f0; }
  .cell.olive { background: #8f9a2e; color: #fff; border: 3px solid #8f4a12; }
  .cell.flag { background: linear-gradient(135deg, transparent 50%, #cf1322 50%) right 1px bottom 2px / 10px 11px no-repeat, #fff; }
  .fit { display: block; flex: none; overflow: visible; }
  text { font-family: 'Liberation Sans', 'Noto Sans CJK KR', sans-serif; font-size: 20px; }
  text.ko { font-family: 'Noto Sans CJK KR', sans-serif; font-size: 18px; }
  text.bold { font-weight: bold; }
  .total { width: 37px; margin: 0 14px 0 2px; }
  .minute .total { margin: 0 14px 0 1px; }
  .check { width: 19px; height: 22px; margin: 0 0 4px 4px; background: #fff; border: 1.5px solid #8b929b; box-sizing: border-box; }
  .d { margin: 0 0 4px 5px; }
  .quotes { display: flex; align-items: center; padding-top: 5px; height: 29px; gap: 3px; margin-bottom: 5px; }
  .daily .quotes { padding-left: 5px; }
  .minute .quotes { padding-left: 2px; }
  .info { display: flex; align-items: center; width: 1111px; height: 29px; box-sizing: border-box; border: 1.5px solid #8b929b; background: #f1f1f1; margin-right: 3px; flex: none; }
  .info text { font-family: 'Liberation Mono', 'Noto Sans CJK KR', monospace; font-size: 21px; }
  .item { display: flex; flex: none; }
  .rule { height: 26px; background: #b4b7bb; }
  .mark { background: linear-gradient(135deg, #555 50%, transparent 50%) left top / 7px 7px no-repeat; }
  button { display: flex; align-items: center; justify-content: center; width: 64px; height: 29px; padding: 0; border: 1.5px solid #8b929b; box-sizing: border-box; flex: none; }
  .buy { background: #f4ceca; }
  .sell { background: #c6def2; }
  .eval { width: 30px; background: #ececec; }
  .chart { display: block; }
</style>
